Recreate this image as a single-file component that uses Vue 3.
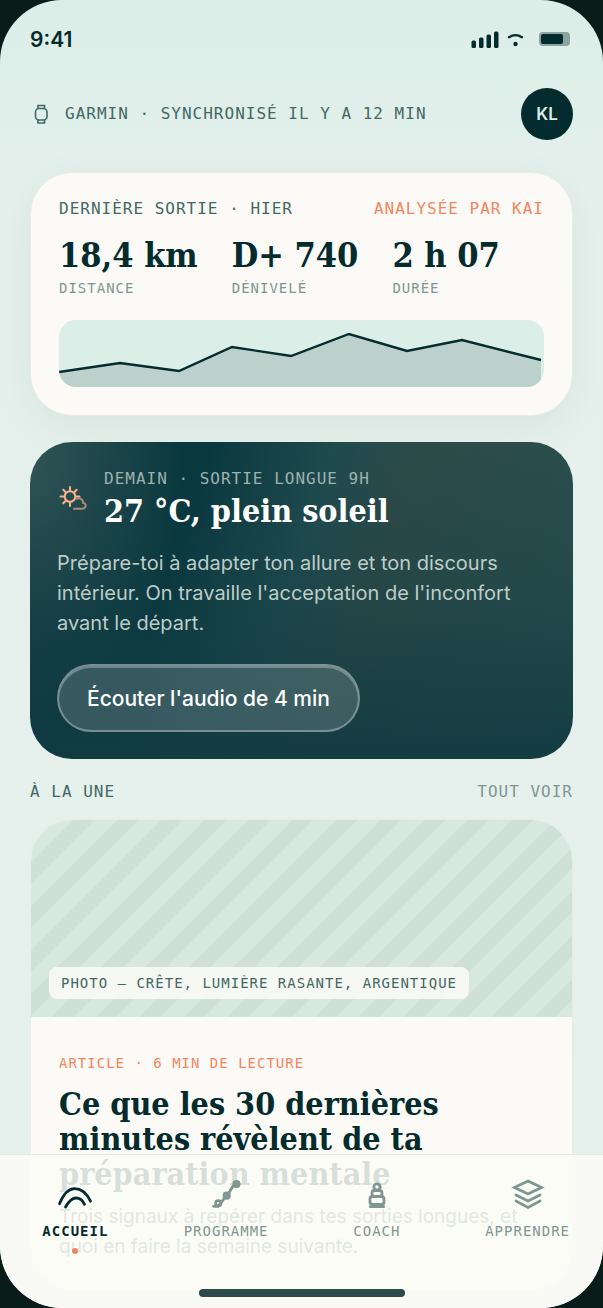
<script setup>
import { ref } from 'vue'

const stats = [
  { value: '18,4 km', label: 'Distance' },
  { value: 'D+ 740', label: 'Dénivelé' },
  { value: '2 h 07', label: 'Durée' }
]

const tabs = [
  { id: 'home', label: 'Accueil' },
  { id: 'program', label: 'Programme' },
  { id: 'coach', label: 'Coach' },
  { id: 'learn', label: 'Apprendre' }
]

const currentTab = ref('home')
</script>

<template>
  <div class="screen">
    <div class="statusbar">
      <span class="time">9:41</span>
      <svg class="signals" width="100" height="18" viewBox="0 0 100 18">
        <rect x="0.500" y="10.500" width="4.500" height="7.500" rx="1.500" />
        <rect x="8" y="7.500" width="4.500" height="10.500" rx="1.500" />
        <rect x="15.500" y="4.500" width="4.500" height="13.500" rx="1.500" />
        <rect x="23" y="1.500" width="4.500" height="16.500" rx="1.500" />
        <path d="M38 7.200Q44.500 3 51 7.200" class="wave" />
        <circle cx="44.500" cy="14" r="2.200" />
        <rect x="68" y="2" width="31" height="14" rx="4" opacity="0.38" />
        <rect x="70" y="4" width="22" height="10" rx="2" />
      </svg>
    </div>

    <main class="content">
      <header class="header">
        <p class="sync label">
          <svg width="22" height="22" viewBox="0 0 22 22">
            <rect x="5.500" y="5.500" width="11.500" height="11.500" rx="3.500" />
            <path d="M8 5.500V2.500H14.500V5.500M8 17V20H14.500V17" />
          </svg>
          Garmin · Synchronisé il y a 12 min
        </p>
        <button class="avatar">KL</button>
      </header>

      <section class="card run">
        <div class="row">
          <h2 class="label">Dernière sortie · Hier</h2>
          <span class="label accent">Analysée par Kai</span>
        </div>
        <div class="stats">
          <div v-for="stat in stats" :key="stat.label">
            <p class="display">{{ stat.value }}</p>
            <p class="label small muted">{{ stat.label }}</p>
          </div>
        </div>
        <svg class="profile" viewBox="0 0 485 67" preserveAspectRatio="none">
          <path class="area" d="M0 52L61 43L120 51L173 27L232 36L290 14L348 31L403 20L482 40V67H0Z" />
          <path class="line" d="M0 52L61 43L120 51L173 27L232 36L290 14L348 31L403 20L482 40" />
        </svg>
      </section>

      <section class="weather">
        <div class="forecast">
          <svg width="30" height="30" viewBox="0 0 30 30">
            <g class="sun">
              <circle cx="13" cy="12.500" r="5.300" />
              <path d="M13 3V6M13 19V22M3.500 12.500H7M19 12.500H22.500M6.300 5.800L8.500 8M19.700 5.800L17.500 8M6.300 19.200L8.500 17" />
            </g>
            <path class="cloud" d="M17 24.700H25C28 24.700 29 22.500 28.500 20.700C28 19.300 27 19 26 18.700C26.300 15.500 22.500 13 19.500 15" />
          </svg>
          <div>
            <p class="label">Demain · Sortie longue 9h</p>
            <h2 class="display">27 °C, plein soleil</h2>
          </div>
        </div>
        <p class="advice">
          Prépare-toi à adapter ton allure et ton discours intérieur. On travaille l'acceptation de l'inconfort avant le
          départ.
        </p>
        <button class="listen">Écouter l'audio de 4 min</button>
      </section>

      <div class="row featured">
        <h2 class="label">À la une</h2>
        <a class="label muted" href="#articles">Tout voir</a>
      </div>

      <article class="card article">
        <div class="photo">
          <span class="label small">Photo — crête, lumière rasante, argentique</span>
        </div>
        <div class="story">
          <p class="label small accent">Article · 6 min de lecture</p>
          <h3 class="display">Ce que les 30 dernières minutes révèlent de ta préparation mentale</h3>
          <p class="summary">Trois signaux à repérer dans tes sorties longues, et quoi en faire la semaine suivante.</p>
        </div>
      </article>
    </main>

    <nav class="tabbar">
      <div class="tabs">
        <button v-for="tab in tabs" :key="tab.id" :class="{ active: tab.id === currentTab }" @click="currentTab = tab.id">
          <svg width="36" height="34" viewBox="0 0 36 34">
            <g v-if="tab.id === 'home'">
              <path d="M2.500 26.700C7 16 12 11.700 17.500 11.700C23.500 11.700 29 15 33.500 24.200" />
              <path d="M8.500 30C12 24 15 21 19 21C23 21 25.500 23 27.500 27.300" />
            </g>
            <g v-else-if="tab.id === 'program'">
              <path d="M5.500 29.300H10L18.700 18.700C22 17 23 8 28.500 7" />
              <circle cx="10.300" cy="26.300" r="2.700" />
              <circle cx="18.700" cy="18.700" r="2.700" />
              <circle cx="28.500" cy="7" r="2.700" />
            </g>
            <g v-else-if="tab.id === 'coach'">
              <circle cx="18" cy="10" r="3.200" />
              <rect x="13" y="13.500" width="10" height="6" rx="2.500" />
              <rect x="11" y="19.500" width="14" height="8" rx="2.500" />
              <path d="M11.300 29.700H24.700" />
            </g>
            <g v-else>
              <path d="M18 4L31.500 10.500L18 17L4.500 10.500Z" />
              <path d="M6 18L18 24L30 18M6 24L18 30.500L30 24" />
            </g>
          </svg>
          <span class="label small">{{ tab.label }}</span>
          <i class="dot"></i>
        </button>
      </div>
      <div class="indicator"></div>
    </nav>
  </div>
</template>

<style>
body {
  margin: 0;
  background: #0a1c1a;
}
</style>

<style scoped>
.screen {
  position: relative;
  display: flex;
  flex-direction: column;
  height: 100vh;
  overflow: hidden;
  border-radius: 62px;
  background: linear-gradient(180deg, #dbeee7 0, #e5f0ec 200px, #e6f0ec 100%);
  color: #042b2d;
  font-family: Inter, sans-serif;
}

h2,
h3,
p {
  margin: 0;
}

button {
  border: none;
  font-family: inherit;
  cursor: pointer;
}

.label {
  font-family: "DejaVu Sans Mono", monospace;
  font-size: 16px;
  font-weight: 400;
  line-height: 20px;
  letter-spacing: 1px;
  text-transform: uppercase;
  white-space: nowrap;
  color: #426863;
}

.small {
  font-size: 14px;
}

.muted {
  color: #7f9692;
}

.accent {
  color: #f58560;
}

.display {
  font-family: "DejaVu Serif Condensed", "DejaVu Serif", serif;
  font-size: 32px;
  font-weight: 700;
  line-height: 35px;
}

.row {
  display: flex;
  justify-content: space-between;
  align-items: center;
}

.statusbar {
  display: flex;
  justify-content: space-between;
  align-items: center;
  flex-shrink: 0;
  height: 78px;
  padding: 0 32px 0 30px;
}

.time {
  font-size: 21px;
  font-weight: 600;
}

.signals {
  fill: #042b2d;
}

.signals .wave {
  fill: none;
  stroke: #042b2d;
  stroke-width: 2.4;
  stroke-linecap: round;
}

.content {
  flex: 1;
  padding: 10px 30px 18px;
  overflow-y: auto;
  scrollbar-width: none;
}

.header {
  display: flex;
  justify-content: space-between;
  align-items: center;
}

.sync {
  display: flex;
  align-items: center;
  gap: 13px;
}

.sync svg {
  fill: none;
  stroke: #426863;
  stroke-width: 1.6;
}

.avatar {
  width: 52px;
  height: 52px;
  padding: 0;
  border-radius: 50%;
  background: #042b2d;
  color: #dbeee7;
  font-size: 17px;
  font-weight: 600;
}

.card {
  border: 1px solid #e8ebe6;
  border-radius: 42px;
  background: #fbfaf6;
}

.run {
  margin-top: 32px;
  padding: 26px 28px 28px;
  box-shadow: 0 10px 40px rgba(4, 43, 45, 0.06);
}

.stats {
  display: flex;
  gap: 34px;
  margin: 19px 0 22px;
}

.stats .display {
  margin-bottom: 5px;
  font-size: 34px;
}

.profile {
  display: block;
  width: 100%;
  height: 67px;
  border-radius: 17px;
  background: #dbeee7;
}

.area {
  fill: #bdd1cc;
}

.line {
  fill: none;
  stroke: #042b2d;
  stroke-width: 2.4;
}

.weather {
  margin-top: 26px;
  padding: 27px;
  border-radius: 42px;
  background:
    linear-gradient(180deg, rgba(18, 59, 66, 0) 0%, rgba(18, 59, 66, 0.25) 45%, rgba(18, 59, 66, 0.95) 100%),
    radial-gradient(ellipse 28% 80% at 0 8%, rgba(54, 88, 88, 0.9), rgba(54, 88, 88, 0) 100%),
    linear-gradient(108deg, rgba(38, 80, 83, 0) 28%, rgba(38, 80, 83, 0.8) 48%, #2d4a48 60%, #28504f 100%),
    #09383f;
}

.forecast {
  display: flex;
  align-items: center;
  gap: 17px;
}

.forecast svg {
  flex-shrink: 0;
  fill: none;
  stroke-linecap: round;
  stroke-width: 2;
}

.sun {
  stroke: #ffb08c;
}

.cloud {
  stroke: #b08a76;
}

.forecast .label {
  color: #9db3ae;
}

.forecast .display {
  margin-top: 5px;
  color: #fff;
}

.advice {
  margin-top: 19px;
  color: #bccdc8;
  font-size: 20px;
  line-height: 30px;
}

.listen {
  height: 68px;
  margin-top: 26px;
  padding: 0 28px;
  border: 2px solid rgba(255, 255, 255, 0.32);
  border-radius: 34px;
  background: rgba(255, 255, 255, 0.16);
  box-shadow: inset 0 2px 0 rgba(255, 255, 255, 0.28);
  color: #fff;
  font-size: 21px;
  font-weight: 500;
}

.listen,
.avatar {
  display: block;
}

.featured {
  margin: 23px 0 17px;
}

.featured a {
  text-decoration: none;
}

.article {
  overflow: hidden;
}

.photo {
  display: flex;
  align-items: flex-end;
  height: 197px;
  padding: 0 18px 18px;
  box-sizing: border-box;
  background: repeating-linear-gradient(135deg, #cfe0d9 0 14px, #d7e8e1 14px 30px, #cfe0d9 30px 31px);
}

.photo .label {
  padding: 6px 12px;
  border-radius: 8px;
  background: rgba(251, 250, 246, 0.86);
}

.story {
  padding: 36px 28px 28px;
}

.story .display {
  margin: 14px 0 10px;
}

.summary {
  color: #426863;
  font-size: 19px;
  line-height: 30px;
}

.tabbar {
  position: absolute;
  right: 0;
  bottom: 0;
  left: 0;
  border-top: 1px solid #e4e9e4;
  background: rgba(252, 251, 247, 0.86);
}

.tabs {
  display: grid;
  grid-template-columns: repeat(4, 1fr);
}

.tabs button {
  display: flex;
  flex-direction: column;
  align-items: center;
  padding: 22px 0 0;
  background: none;
}

.tabs svg {
  margin-bottom: 10px;
  fill: none;
  stroke: #7f9692;
  stroke-width: 2.8;
  stroke-linecap: round;
}

.tabs .label {
  color: #7f9692;
}

.tabs .active svg {
  stroke: #042b2d;
}

.tabs .active .label {
  color: #042b2d;
  font-weight: 700;
}

.dot {
  width: 6px;
  height: 6px;
  margin-top: 7px;
  border-radius: 50%;
}

.active .dot {
  background: #f58560;
}

.indicator {
  width: 206px;
  height: 8px;
  margin: 35px auto 11px;
  border-radius: 4px;
  background: #2a4a4c;
}
</style>
